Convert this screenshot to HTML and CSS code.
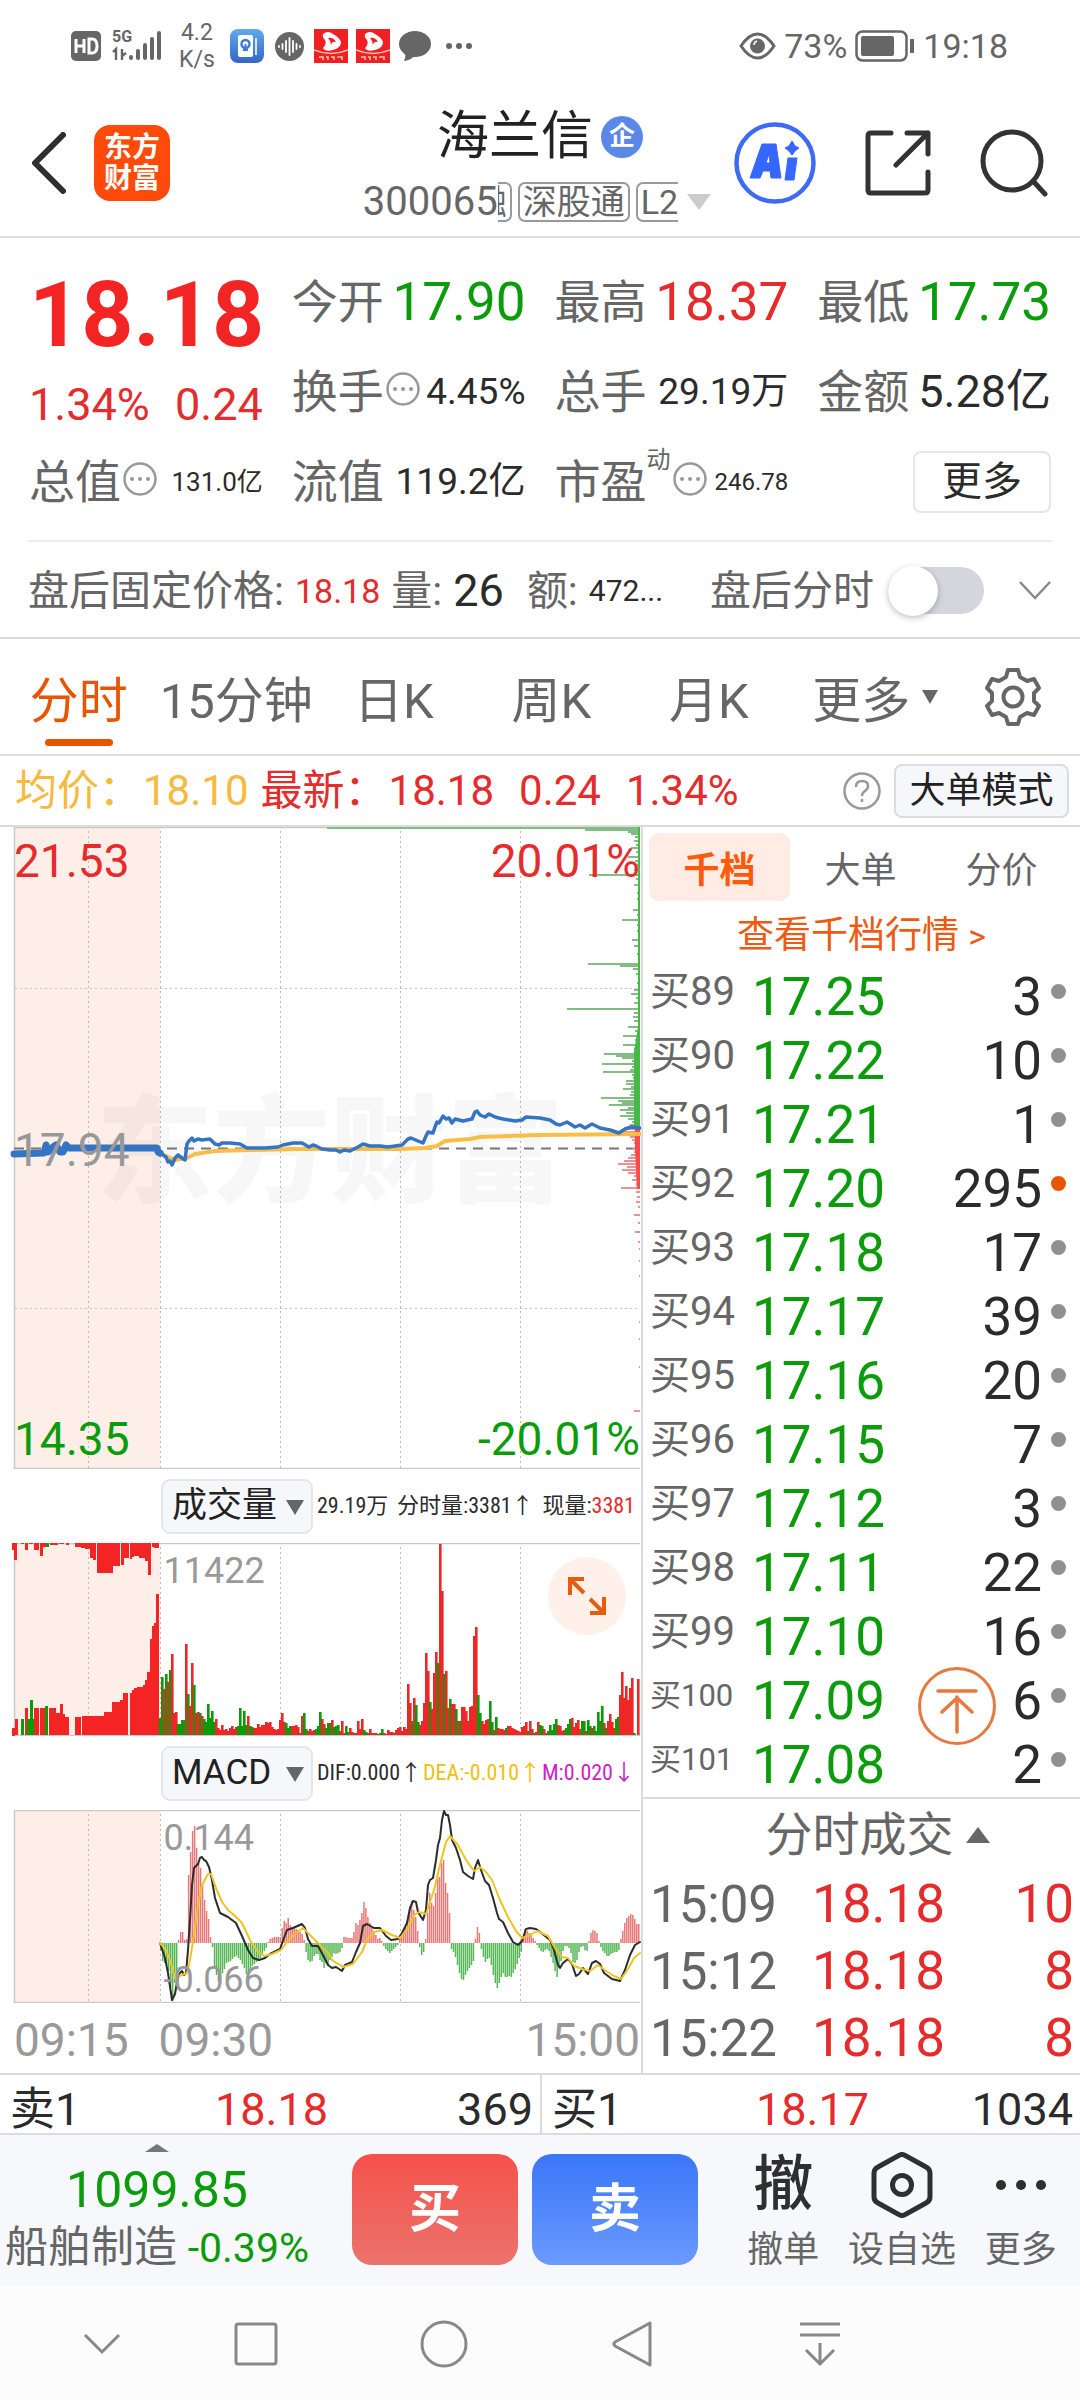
FILE: index.html
```html
<!DOCTYPE html>
<html lang="zh-CN">
<head>
<meta charset="utf-8">
<meta name="viewport" content="width=device-width, initial-scale=1">
<title>海兰信 300065</title>
<link rel="stylesheet" href="styles.css">
</head>
<body>
<div class="status">
  <svg class="st-hd" width="30" height="30" viewBox="0 0 30 30"><rect width="30" height="30" rx="5" fill="#666"/><path d="M5 8v14M13 8v14M5 15h8M18 8v14h3q5 0 5-7t-5-7z" fill="none" stroke="#fff" stroke-width="3"/></svg>
  <div class="st-signal"><span>5G</span>
    <svg width="50" height="32" viewBox="0 0 50 32"><path d="M1 22l3-3v11M10 19v11M10 26l4-3" fill="none" stroke="#666" stroke-width="2.4"/><g stroke="#666" stroke-width="4" stroke-linecap="round"><path d="M19 27v1M26 21v7M33 15v13M40 9v19M47 3v25"/></g></svg>
  </div>
  <div class="st-rate">4.2<br>K/s</div>
  <svg class="st-app" width="34" height="34" viewBox="0 0 34 34"><defs><linearGradient id="ga" x2="0" y2="1"><stop stop-color="#5fa9ee"/><stop offset="1" stop-color="#3566c8"/></linearGradient></defs><rect width="34" height="34" rx="8" fill="url(#ga)"/><rect x="8" y="6" width="15" height="22" rx="2" fill="#fff"/><path d="M26 9v17" stroke="#d4e6fb" stroke-width="2"/><circle cx="15.500" cy="15" r="4" fill="none" stroke="#3f7bd6" stroke-width="2.500"/><path d="M13 21h5M15.500 15v6" stroke="#3f7bd6" stroke-width="2"/></svg>
  <svg class="st-wave" width="29" height="29" viewBox="0 0 29 29"><circle cx="14.500" cy="14.500" r="14.500" fill="#666"/><path d="M4 14v1M7.500 12v5M11 9v11M14.500 6v17M18 9v11M21.500 12v5M25 14v1" stroke="#fff" stroke-width="1.800" stroke-linecap="round"/></svg>
  <svg class="st-red" width="34" height="34" viewBox="0 0 34 34"><rect width="34" height="34" fill="#ef1f24"/><path d="M9 5q5-4 10 0 6 3 8 8 0 6-8 8-8 2-10-2 4-4 2-8-3-3-2-6z" fill="#fff"/><path d="M14 9q5-1 8 4-4-1-5 3 0-4-3-7z" fill="#ef1f24"/><path d="M0 21q17 7 34 0M5 28h4v3M12 28h2v3M17 28h3v3M23 28h5v3" fill="none" stroke="#f7c7a9" stroke-width="1.600"/></svg>
  <svg class="st-red" width="34" height="34" viewBox="0 0 34 34"><rect width="34" height="34" fill="#ef1f24"/><path d="M9 5q5-4 10 0 6 3 8 8 0 6-8 8-8 2-10-2 4-4 2-8-3-3-2-6z" fill="#fff"/><path d="M14 9q5-1 8 4-4-1-5 3 0-4-3-7z" fill="#ef1f24"/><path d="M0 21q17 7 34 0M5 28h4v3M12 28h2v3M17 28h3v3M23 28h5v3" fill="none" stroke="#f7c7a9" stroke-width="1.600"/></svg>
  <svg class="st-chat" width="32" height="30" viewBox="0 0 32 30"><ellipse cx="16" cy="13" rx="16" ry="13" fill="#666"/><path d="M6 20q1 6-1 10 8-1 11-6z" fill="#666"/></svg>
  <svg class="st-dots" width="26" height="6" viewBox="0 0 26 6"><g fill="#666"><circle cx="3" cy="3" r="3"/><circle cx="13" cy="3" r="3"/><circle cx="23" cy="3" r="3"/></g></svg>
  <div class="st-right">
    <svg width="37" height="28" viewBox="0 0 37 28"><path d="M2 14Q10 2 18.500 2T35 14Q27 26 18.500 26T2 14z" fill="none" stroke="#666" stroke-width="3"/><circle cx="18.500" cy="14" r="7.500" fill="#666"/><path d="M15 13q0-3 3-4" fill="none" stroke="#fff" stroke-width="1.500"/></svg>
    <span>73%</span>
    <svg width="60" height="32" viewBox="0 0 60 32"><rect x="1.500" y="1.500" width="50" height="29" rx="6" fill="none" stroke="#666" stroke-width="2.500"/><rect x="6" y="6" width="33" height="20" rx="2" fill="#666"/><path d="M57 9v14" stroke="#666" stroke-width="4"/></svg>
    <span>19:18</span>
  </div>
</div>

<header class="head">
  <div class="head-left">
    <button class="icon" aria-label="返回"><svg width="35" height="62" viewBox="0 0 35 62"><path d="M32 3L4 31l28 28" fill="none" stroke="#2f2f2f" stroke-width="6" stroke-linecap="round" stroke-linejoin="round"/></svg></button>
    <a class="logo" href="#home">东方<br>财富</a>
  </div>
  <div class="head-mid">
    <h1>海兰信<span class="corp">企</span></h1>
    <div class="code">300065<span class="tag tag-cut">融</span><span class="tag">深股通</span><span class="tag tag-open">L2</span><button class="icon code-more" aria-label="展开"><svg width="24" height="16" viewBox="0 0 24 16"><path d="M0 0h24L12 16z" fill="#ccc"/></svg></button></div>
  </div>
  <div class="head-right">
    <button class="icon" aria-label="AI"><svg width="82" height="82" viewBox="0 0 82 82"><circle cx="41" cy="41" r="38.500" fill="none" stroke="#3d6bf5" stroke-width="4.500"/><path d="M28 22h14l5 34h-10l-1-7h-7l-3 7H16zM32 41h4l-1-9z" fill="#3566ff" fill-rule="evenodd" stroke="#3566ff" stroke-width="1"/><path d="M54 36h9l-3 22h-9zM58 19l3 5 4 2-4 3-3 4-3-4-4-3 4-2z" fill="#3566ff" stroke="#3566ff" stroke-width="1"/></svg></button>
    <button class="icon" aria-label="分享"><svg width="66" height="66" viewBox="0 0 66 66"><path d="M26 3H6Q3 3 3 6v54q0 3 3 3h54q3 0 3-3V42M42 3h21v21M63 3L31 35" fill="none" stroke="#333" stroke-width="5" stroke-linecap="round" stroke-linejoin="round"/></svg></button>
    <button class="icon" aria-label="搜索"><svg width="68" height="68" viewBox="0 0 68 68"><circle cx="32" cy="32" r="29" fill="none" stroke="#333" stroke-width="5"/><path d="M53 52l12 13" stroke="#333" stroke-width="5" stroke-linecap="round"/></svg></button>
  </div>
</header>

<section class="quote">
  <div class="grid">
    <div class="last"><strong>18.18</strong><div class="chg"><span>1.34%</span><span>0.24</span></div></div>
    <div class="cell"><span>今开</span><b class="v52 down">17.90</b></div>
    <div class="cell"><span>最高</span><b class="v52 up">18.37</b></div>
    <div class="cell"><span>最低</span><b class="v52 down">17.73</b></div>
    <div class="cell"><span>换手</span><svg class="info" viewBox="0 0 34 34"><circle cx="17" cy="17" r="15.500"/><path d="M9 17h.1M17 17h.1M25 17h.1"/></svg><b class="v36">4.45%</b></div>
    <div class="cell"><span>总手</span><b class="v36">29.19万</b></div>
    <div class="cell"><span>金额</span><b class="v44">5.28亿</b></div>
    <div class="cell"><span>总值</span><svg class="info" viewBox="0 0 34 34"><circle cx="17" cy="17" r="15.500"/><path d="M9 17h.1M17 17h.1M25 17h.1"/></svg><b class="v26">131.0亿</b></div>
    <div class="cell"><span>流值</span><b class="v36">119.2亿</b></div>
    <div class="cell"><span>市盈</span><sup>动</sup><svg class="info" viewBox="0 0 34 34"><circle cx="17" cy="17" r="15.500"/><path d="M9 17h.1M17 17h.1M25 17h.1"/></svg><b class="v24">246.78</b></div>
    <div class="cell"><button class="more">更多</button></div>
  </div>
  <div class="after">
    <span>盘后固定价格:</span><b class="v34 up">18.18</b>
    <span>量:</span><b class="v44">26</b>
    <span class="amt">额:</span><b class="v30">472...</b>
    <label class="switch">盘后分时<input type="checkbox" role="switch"></label>
    <button class="icon" aria-label="展开盘后"><svg width="34" height="22" viewBox="0 0 34 22"><path d="M2 2l15 16L32 2" fill="none" stroke="#888" stroke-width="2.500"/></svg></button>
  </div>
</section>

<nav class="tabs">
  <button class="on">分时</button><button>15分钟</button><button>日K</button><button>周K</button><button>月K</button>
  <button class="tab-more">更多<svg width="16" height="14" viewBox="0 0 16 14"><path d="M0 0h16L8 14z" fill="#666"/></svg></button>
  <button class="gear" aria-label="设置"><svg width="60" height="60" viewBox="0 0 60 60"><path d="M25 3h10l2 7 7 4 7-2 5 9-5 5v8l5 5-5 9-7-2-7 4-2 7H25l-2-7-7-4-7 2-5-9 5-5v-8l-5-5 5-9 7 2 7-4z" fill="none" stroke="#666" stroke-width="4" stroke-linejoin="round"/><circle cx="30" cy="30" r="9.500" fill="none" stroke="#666" stroke-width="4"/></svg></button>
</nav>

<div class="avg">
  <span class="gold">均价：</span><span class="gold">18.10</span>
  <span class="up lbl">最新：</span><span class="up">18.18</span><span class="up sp">0.24</span><span class="up sp">1.34%</span>
  <button class="icon help" aria-label="帮助"><svg width="38" height="38" viewBox="0 0 38 38"><circle cx="19" cy="19" r="17.500" fill="none" stroke="#999" stroke-width="2.500"/><path d="M13 15q0-6 6-6t6 5q0 3-3 5t-3 5M19 27v3" fill="none" stroke="#999" stroke-width="2.500"/></svg></button>
  <button class="mode">大单模式</button>
</div>

<main class="main">
  <section class="charts">
    <div class="chart">
      <svg id="price" viewBox="0 0 641 642"></svg>
      <span class="ax tl up">21.53</span><span class="ax tr up">20.01%</span>
      <span class="ax ml mute">17.94</span>
      <span class="ax bl down">14.35</span><span class="ax br down">-20.01%</span>
    </div>
    <div class="ind">
      <div class="pick"><select aria-label="成交指标"><option>成交量</option></select><svg width="18" height="15" viewBox="0 0 18 15"><path d="M0 0h18L9 15z" fill="#666"/></svg></div>
      <div class="vals vals-vol"><span>29.19万</span><span>分时量:3381↑</span><span>现量:<i class="up">3381</i></span></div>
    </div>
    <div class="chart">
      <svg id="volume" viewBox="0 0 641 193"></svg>
      <span class="ax2 top">11422</span>
      <button class="expand" aria-label="全屏"><svg width="38" height="38" viewBox="0 0 38 38"><path d="M16 2H2v16M2 2l14 14M22 36h14V20M36 36L22 22" fill="none" stroke="#e65c0f" stroke-width="4"/></svg></button>
    </div>
    <div class="ind">
      <div class="pick"><select aria-label="技术指标"><option>MACD</option></select><svg width="18" height="15" viewBox="0 0 18 15"><path d="M0 0h18L9 15z" fill="#666"/></svg></div>
      <div class="vals"><span>DIF:0.000↑</span><span class="dea">DEA:-0.010↑</span><span class="m">M:0.020↓</span></div>
    </div>
    <div class="chart">
      <svg id="macd" viewBox="0 0 641 193"></svg>
      <span class="ax2 top">0.144</span><span class="ax2 bot">-0.066</span>
    </div>
    <div class="times"><span>09:15</span><span>09:30</span><span class="end">15:00</span></div>
  </section>

  <section class="side">
    <div class="side-tabs"><button class="on">千档</button><button>大单</button><button>分价</button></div>
    <a class="depth-link" href="#depth">查看千档行情 <span>&gt;</span></a>
    <div class="book-wrap">
      <table class="book">
        <tr><th>买89</th><td class="down">17.25</td><td>3</td><td class="dot"></td></tr>
        <tr><th>买90</th><td class="down">17.22</td><td>10</td><td class="dot"></td></tr>
        <tr><th>买91</th><td class="down">17.21</td><td>1</td><td class="dot"></td></tr>
        <tr><th>买92</th><td class="down">17.20</td><td>295</td><td class="dot hot"></td></tr>
        <tr><th>买93</th><td class="down">17.18</td><td>17</td><td class="dot"></td></tr>
        <tr><th>买94</th><td class="down">17.17</td><td>39</td><td class="dot"></td></tr>
        <tr><th>买95</th><td class="down">17.16</td><td>20</td><td class="dot"></td></tr>
        <tr><th>买96</th><td class="down">17.15</td><td>7</td><td class="dot"></td></tr>
        <tr><th>买97</th><td class="down">17.12</td><td>3</td><td class="dot"></td></tr>
        <tr><th>买98</th><td class="down">17.11</td><td>22</td><td class="dot"></td></tr>
        <tr><th>买99</th><td class="down">17.10</td><td>16</td><td class="dot"></td></tr>
        <tr><th class="small">买100</th><td class="down">17.09</td><td>6</td><td class="dot"></td></tr>
        <tr><th class="small">买101</th><td class="down">17.08</td><td>2</td><td class="dot"></td></tr>
      </table>
      <button class="to-top" aria-label="回到顶部"><svg width="78" height="78" viewBox="0 0 78 78"><circle cx="39" cy="39" r="37.500" fill="none" stroke="#e5793f" stroke-width="3"/><path d="M20 24h38M39 30v35M24 45l15-14 15 14" fill="none" stroke="#e5793f" stroke-width="3.500" stroke-linecap="round" stroke-linejoin="round"/></svg></button>
    </div>
    <button class="deals-head">分时成交<svg width="24" height="16" viewBox="0 0 24 16"><path d="M0 16h24L12 0z" fill="#666"/></svg></button>
    <table class="deals">
      <tr><th>15:09</th><td>18.18</td><td>10</td></tr>
      <tr><th>15:12</th><td>18.18</td><td>8</td></tr>
      <tr><th>15:22</th><td>18.18</td><td>8</td></tr>
    </table>
  </section>
</main>

<div class="best">
  <div><span>卖1</span><span class="up">18.18</span><span>369</span></div>
  <div><span>买1</span><span class="up">18.17</span><span>1034</span></div>
</div>

<footer class="actions">
  <button class="index"><svg width="24" height="8" viewBox="0 0 24 8"><path d="M0 8h24L12 0z" fill="#777"/></svg><span class="idx-v">1099.85</span><span class="idx-n">船舶制造 <em>-0.39%</em></span></button>
  <button class="trade buy">买</button>
  <button class="trade sell">卖</button>
  <div class="tools">
    <button><span class="tool-ico che">撤</span>撤单</button>
    <button><span class="tool-ico"><svg width="62" height="66" viewBox="0 0 62 66"><path d="M27 4q4-3 8 0l20 11q4 2 4 6v24q0 4-4 6L35 62q-4 3-8 0L7 51q-4-2-4-6V21q0-4 4-6z" fill="none" stroke="#2f2f2f" stroke-width="5"/><circle cx="31" cy="33" r="9.500" fill="none" stroke="#2f2f2f" stroke-width="5"/></svg></span>设自选</button>
    <button><span class="tool-ico"><svg width="52" height="12" viewBox="0 0 52 12"><g fill="#2f2f2f"><circle cx="6" cy="6" r="5"/><circle cx="26" cy="6" r="5"/><circle cx="46" cy="6" r="5"/></g></svg></span>更多</button>
  </div>
</footer>

<nav class="sysnav">
  <button aria-label="收起"><svg width="38" height="24" viewBox="0 0 38 24"><path d="M2 3l17 17L36 3" /></svg></button>
  <button aria-label="最近任务"><svg width="44" height="44" viewBox="0 0 44 44"><rect x="2" y="2" width="40" height="40" rx="2"/></svg></button>
  <button aria-label="主页"><svg width="48" height="48" viewBox="0 0 48 48"><circle cx="24" cy="24" r="22"/></svg></button>
  <button aria-label="后退"><svg width="42" height="48" viewBox="0 0 42 48"><path d="M39 3v42L4 26q-2-2 0-4z" stroke-linejoin="round"/></svg></button>
  <button aria-label="通知"><svg width="40" height="46" viewBox="0 0 40 46"><path d="M0 3h40M0 14h40M20 22v20M6 29l14 14 14-14"/></svg></button>
</nav>
<script src="charts.js"></script>
</body>
</html>
```
FILE: styles.css
```css
* { box-sizing: border-box; }
body { margin: 0; background: #fff; color: #2b2b2b; font-family: Roboto, "Noto Sans CJK SC", sans-serif; }
button { font: inherit; color: inherit; background: none; border: 0; padding: 0; margin: 0; }
b, i, em { font-weight: 400; font-style: normal; }
svg { display: block; flex: none; }
.icon { display: block; }
.up { color: #e52b2b; }
.down { color: #0a9c0a; }
.mute { color: #999; }

/* status bar */
.status { display: flex; align-items: center; height: 92px; padding: 0 72px 0 71px; color: #666; }
.st-signal { position: relative; margin-left: 11px; }
.st-signal span { position: absolute; left: 0; top: 0; font-size: 16px; line-height: 14px; font-weight: 700; }
.st-rate { margin-left: 17px; font-size: 23px; line-height: 27px; text-align: center; }
.st-app { margin-left: 15px; }
.st-wave { margin-left: 11px; }
.st-red { margin-left: 8px; }
.st-wave + .st-red { margin-left: 10px; }
.st-chat { margin-left: 9px; }
.st-dots { margin-left: 15px; }
.st-right { display: flex; align-items: center; gap: 8px; margin-left: auto; font-size: 34px; line-height: 40px; }

/* header */
.head { display: grid; grid-template-columns: 1fr auto 1fr; height: 146px; border-bottom: 2px solid #dcdcdc; }
.head-left, .head-right { display: flex; align-items: center; padding-bottom: 2px; }
.head-left { padding-left: 31px; gap: 28px; }
.head-right { justify-content: flex-end; gap: 49px; padding-right: 32px; }
.logo { width: 76px; height: 76px; padding-top: 7px; border-radius: 16px; background: #ff4a0a; color: #fff; font-size: 28px; line-height: 31px; font-weight: 700; text-align: center; text-decoration: none; }
.head-mid { padding-top: 13px; }
h1 { display: flex; justify-content: center; align-items: center; gap: 8px; margin: 0; font-size: 52px; line-height: 64px; font-weight: 400; color: #222; }
.corp { width: 42px; height: 42px; border-radius: 50%; background: #5b87e8; color: #fff; font-size: 26px; line-height: 40px; font-weight: 700; text-align: center; }
.code { display: flex; align-items: center; justify-content: center; margin-top: 10px; padding-right: 6px; font-size: 40px; line-height: 46px; color: #666; }
.tag { height: 40px; margin-right: 6px; padding: 0 3px; border: 2px solid #999; border-radius: 7px; font-size: 34px; line-height: 36px; white-space: nowrap; }
.tag-cut { display: flex; justify-content: flex-end; width: 14px; overflow: hidden; border-left: 0; border-radius: 0 7px 7px 0; }
.tag-open { margin-right: 9px; padding-right: 0; border-right: 0; border-radius: 7px 0 0 7px; }

/* quote */
.quote { border-bottom: 2px solid #dcdcdc; }
.grid { display: grid; grid-template-columns: repeat(4, minmax(0, 1fr)); column-gap: 29px; grid-auto-rows: 90px; padding: 19px 29px 13px; }
.last { grid-row: span 2; padding-top: 6px; color: #f32424; white-space: nowrap; text-align: center; }
.last strong { display: block; font-size: 91px; line-height: 104px; font-weight: 700; }
.chg { display: flex; justify-content: space-between; font-size: 45px; line-height: 76px; color: #e52b2b; }
.cell { display: flex; align-items: center; font-size: 46px; line-height: 60px; color: #666; white-space: nowrap; }
.cell b, .cell .more { margin-left: auto; }
.cell b { color: #2b2b2b; }
.cell b.up { color: #e52b2b; }
.cell b.down { color: #0a9c0a; }
.v52 { font-size: 53px; } .v44 { font-size: 45px; } .v36 { font-size: 37px; } .v34 { font-size: 34px; }
.v30 { font-size: 30px; } .v26 { font-size: 26px; } .v24 { font-size: 24px; }
.info { width: 34px; height: 34px; margin: 0 0 6px 2px; fill: none; stroke: #999; stroke-width: 2.5; }
.info path { stroke-width: 4; stroke-linecap: round; }
.cell sup { align-self: flex-start; font-size: 24px; line-height: 46px; }
.more { width: 138px; height: 62px; border: 2px solid #e6e6e6; border-radius: 8px; color: #2b2b2b; font-size: 40px; line-height: 56px; }
.after { display: flex; align-items: center; height: 97px; margin: 0 28px; padding-top: 2px; border-top: 2px solid #ececec; font-size: 41px; line-height: 60px; color: #666; white-space: nowrap; }
.after b { margin: 0 11px; }
.after b:not(.up) { color: #2b2b2b; }
.amt { margin-left: 12px; }
.switch { display: flex; align-items: center; gap: 14px; margin-left: auto; }
.switch input { appearance: none; display: flex; align-items: center; width: 96px; height: 47px; margin: 0 34px 0 0; border-radius: 24px; background: #d3d6dc; }
.switch input::before { content: ""; width: 50px; height: 50px; flex: none; border-radius: 50%; background: #fff; box-shadow: 0 2px 6px rgba(0, 0, 0, .25); }
.switch input:checked { background: #e85400; justify-content: flex-end; }

/* period tabs */
.tabs { display: grid; grid-template-columns: repeat(6, 7fr) 6fr; height: 117px; border-bottom: 2px solid #dcdcdc; font-size: 49px; color: #666; white-space: nowrap; }
.tabs button { position: relative; display: flex; align-items: center; justify-content: center; gap: 12px; }
.tabs .tab-more { padding-left: 18px; }
.tabs .on { color: #e85400; }
.tabs .on::after { content: ""; position: absolute; left: 50%; bottom: 8px; width: 68px; height: 7px; margin-left: -34px; border-radius: 4px; background: #e85400; }

/* average line */
.avg { display: flex; align-items: center; height: 71px; padding: 0 11px 0 15px; border-bottom: 2px solid #dcdcdc; font-size: 42px; line-height: 60px; white-space: nowrap; }
.gold { color: #f7b93e; }
.avg .gold + .gold { margin-left: 2px; }
.avg .lbl { margin-left: 12px; }
.avg .lbl + .up { margin-left: 2px; }
.avg .sp { margin-left: 25px; }
.help { margin-left: auto; }
.mode { width: 175px; height: 54px; margin-left: 13px; border: 2px solid #d9dce3; border-radius: 8px; background: #f6f7fa; color: #222; font-size: 36px; line-height: 48px; }

/* charts */
.main { display: grid; grid-template-columns: 643fr 437fr; }
.charts { border-right: 2px solid #dcdcdc; min-width: 0; }
.chart { position: relative; }
.chart > svg { width: 100%; height: auto; }
.ax, .ax2 { position: absolute; white-space: nowrap; }
.ax { font-size: 46px; line-height: 48px; }
.ax2 { left: 25.5%; font-size: 36px; line-height: 40px; color: #999; }
.tl, .tr { top: 10px; } .bl, .br { bottom: 6px; }
.tl, .bl, .ml { left: 14px; } .tr, .br { right: 1px; }
.ml { top: 299px; }
.top { top: 8px; } .bot { bottom: 3px; }
.ind { display: flex; align-items: center; height: 74px; padding: 0 6px 0 161px; }
.pick { position: relative; flex: none; }
.pick select { appearance: none; display: block; width: 152px; height: 55px; padding: 0 0 0 9px; border: 2px solid #e4e6ec; border-radius: 9px; background: #f6f7fa; color: #222; font: 35px/48px Roboto, "Noto Sans CJK SC", sans-serif; }
.pick svg { position: absolute; right: 9px; top: 21px; pointer-events: none; }
.vals { display: flex; flex: 1; justify-content: space-between; padding-left: 4px; font-family: "Roboto Condensed", "Liberation Sans Narrow", Roboto, "Noto Sans CJK SC", sans-serif; font-size: 22px; line-height: 50px; white-space: nowrap; }
.dea { color: #f0c010; } .m { color: #cc22cc; }
.expand { position: absolute; right: 15px; top: 14px; width: 78px; height: 78px; border-radius: 50%; background: #fff0e9; display: flex; align-items: center; justify-content: center; }
.times { display: flex; height: 70px; padding: 0 1px 0 14px; font-size: 46px; line-height: 74px; color: #999; gap: 30px; }
.times .end { margin-left: auto; }

/* order book */
.side { display: flex; flex-direction: column; padding-top: 6px; min-width: 0; }
.side-tabs { display: grid; grid-template-columns: repeat(3, 1fr); height: 68px; padding: 0 8px 0 6px; font-size: 36px; color: #666; }
.side-tabs .on { border-radius: 10px; background: #ffede5; color: #ff5a0a; font-weight: 700; }
.depth-link { height: 64px; color: #ee5a12; font-size: 37px; line-height: 70px; text-align: center; text-decoration: none; white-space: nowrap; }
.depth-link span { font-size: 34px; }
.book-wrap { position: relative; }
.book, .deals { width: 100%; border-collapse: collapse; table-layout: fixed; }
.book th, .book td, .deals th, .deals td { padding: 0; text-align: right; font-weight: 400; white-space: nowrap; }
.book tr { height: 64px; }
.book th { width: 104px; padding: 0 0 10px 7px; text-align: left; font-size: 40px; line-height: 54px; color: #666; }
.book th.small { font-size: 31px; }
.book td { font-size: 53px; line-height: 64px; }
.book td:nth-child(2) { width: 138px; }
.book .dot { width: 38px; padding: 0 14px 15px 0; line-height: 0; }
.dot::after { content: ""; display: inline-block; width: 15px; height: 15px; border-radius: 50%; background: #8f8f96; }
.dot.hot::after { background: #e85400; }
.to-top { position: absolute; right: 84px; bottom: 52px; }
.deals-head { display: flex; align-items: center; justify-content: center; gap: 12px; height: 74px; padding-left: 32px; border-top: 2px solid #dcdcdc; font-size: 47px; line-height: 68px; color: #666; }
.deals tr { height: 67px; }
.deals th { width: 134px; padding-left: 7px; text-align: left; font-size: 51px; line-height: 67px; color: #666; }
.deals td { font-size: 53px; line-height: 67px; color: #e52b2b; }
.deals td:nth-child(2) { width: 168px; }
.deals td:last-child { padding-right: 6px; }

/* best bid and ask */
.best { display: grid; grid-template-columns: 1fr 1fr; border-top: 2px solid #dcdcdc; border-bottom: 2px solid #dcdcdc; }
.best div { display: grid; grid-template-columns: 1fr 1fr 1fr; height: 58px; padding: 4px 7px 0 10px; font-size: 45px; line-height: 62px; }
.best div + div { border-left: 2px solid #dcdcdc; }
.best span:nth-child(2) { text-align: center; }
.best span:nth-child(3) { text-align: right; }

/* action bar */
.actions { display: flex; height: 151px; padding-top: 9px; background: #f7f8fb; }
.index { display: flex; flex-direction: column; align-items: center; width: 314px; margin-right: 38px; white-space: nowrap; }
.idx-v { font-size: 50px; line-height: 70px; margin-top: 3px; color: #0a9c0a; }
.idx-n { font-size: 43px; line-height: 44px; color: #666; }
.idx-n em { font-size: 41px; color: #0a9c0a; }
.trade { width: 166px; height: 111px; margin: 10px 14px 0 0; border-radius: 20px; color: #fff; font-size: 52px; line-height: 104px; font-weight: 700; }
.buy { background: linear-gradient(#f4514a, #eb746d); }
.sell { background: linear-gradient(#3a76f8, #6b9aff); }
.tools { display: grid; grid-template-columns: repeat(3, 1fr); flex: 1; margin-left: 12px; }
.tools button { display: flex; flex-direction: column; align-items: center; font-size: 36px; line-height: 48px; color: #666; white-space: nowrap; }
.tool-ico { display: flex; align-items: center; height: 82px; color: #2f2f2f; }
.che { font-size: 60px; line-height: 82px; font-weight: 500; }

/* system navigation */
.sysnav { display: grid; grid-template-columns: 162fr 188fr 188fr 188fr 188fr 166fr; height: 116px; background: #fcfcfc; }
.sysnav button { display: flex; align-items: center; justify-content: center; }
.sysnav button:first-child { padding-left: 42px; }
.sysnav svg { fill: none; stroke: #888; stroke-width: 3; }
```
FILE: charts.js
```js
const RED = '#f42424', GREEN = '#089c08', EDGE = '#c9c9c9';

const rect = (x, y, w, h, fill) => `<rect x="${x}" y="${y}" width="${w}" height="${h}" fill="${fill}"/>`;
const line = (pts, color, w) => `<polyline points="${pts}" fill="none" stroke="${color}" stroke-width="${w}" stroke-linejoin="round" stroke-linecap="round"/>`;

// Call-auction band, dotted time grid and frame shared by the three charts
function frame(h) {
  let s = rect(15, 0, 145, h, '#fdeee8');
  for (const x of [88, 160, 280, 400, 520]) {
    s += `<path d="M${x}.5 4V${h}" stroke="#bbb" stroke-dasharray="2 3"/>`;
  }
  return s + `<path d="M640 .5H14.500V${h - 0.5}H640" fill="none" stroke="${EDGE}" stroke-width="1.500"/>`;
}

/* ---- price ---- */
const priceLine = '160,326 166,330 168,335 170,334 172,338 175,331 178,328 182,331 185,333 187,317 189,314 192,311 194,314 198,312 202,313 210,312 215,317 219,318 222,316 230,316 240,317 247,321 255,321 265,321 278,320 283,318 288,317 293,316 302,316 309,320 313,318 316,319 322,322 330,323 336,323 340,325 344,323 350,324 358,320 363,317 370,319 380,319 388,320 395,319 402,318 408,312 411,311 418,314 423,316 426,309 428,305 433,306 435,300 437,295 439,296 443,289 446,292 449,291 452,296 455,292 463,294 472,292 475,285 477,284 480,288 485,290 489,287 495,290 503,292 515,294 522,293 526,290 540,291 550,293 556,297 560,298 567,295 575,300 580,298 585,301 592,297 600,301 610,303 619,306 625,302 631,300 640,301';
const avgLine = '160,326 168,330 175,333 187,331 195,327 215,324 250,323 300,322 360,322 400,322 425,321 437,319 445,314 470,312 480,310 540,308 640,307';
// resting orders: [y, bar length]
const asks = [[1,313],[3,55],[5,12],[7,9],[10,5],[14,6],[18,4],[21,9],[25,4],[30,12],[34,5],[38,4],[43,6],[48,51],[52,4],[58,6],[66,3],[72,3],[83,7],[88,3],[93,18],[98,3],[104,3],[113,8],[119,6],[127,3],[137,52],[139,20],[142,7],[147,4],[156,3],[163,6],[167,9],[171,4],[176,6],[182,73],[186,6],[190,7],[194,6],[200,12],[204,5],[209,17],[213,5],[218,17],[222,6],[227,36],[229,24],[231,18],[234,8],[237,38],[240,8],[243,10],[245,37],[248,8],[251,7],[254,14],[257,14],[260,9],[262,17],[265,9],[268,10],[271,39],[274,22],[276,18],[278,31],[281,12],[283,20],[286,14],[289,20],[292,12],[295,8],[298,10]];
const bids = [[302,12],[305,20],[307,14],[310,10],[313,8],[316,6],[319,5],[322,8],[325,6],[328,9],[331,12],[334,16],[337,22],[340,13],[343,18],[346,12],[349,6],[353,8],[357,4],[361,19],[365,4],[370,3],[375,4],[380,2],[388,6],[396,2],[405,5],[415,2],[422,1],[434,1],[449,1],[495,1],[512,1],[540,1],[584,6]];

let price = frame(642);
price += '<path d="M15 161.500H640M15 481.500H640" stroke="#c4c4c4" stroke-dasharray="2 3"/>';
price += '<text x="330" y="366" text-anchor="middle" font-size="117" font-weight="900" fill="#000" fill-opacity=".03">东方财富</text>';
price += '<path d="M14 321.500H640" stroke="#777" stroke-width="2" stroke-dasharray="10 7"/>';
for (const [y, w] of asks) price += rect(640 - w, y - 1, w, 2, '#84bd84');
price += '<path d="M640 0v300h-6v-75l4-25V0z" fill="#45b845"/>';
for (const [y, w] of bids) price += rect(640 - w, y - 1, w, 2, '#f09090');
price += '<path d="M640 300v62h-3l-2-40v-22z" fill="#ff4a4a"/>';
price += line(avgLine, '#f8be4a', 4);
price += line(priceLine, '#3474c4', 3.5);
price += line('14,327 44,326 46,318 48,325 53,320 56,318 60,325 63,325 66,318 69,321 76,321 157,321 158,325 160,326', '#3474c4', 7);
document.getElementById('price').innerHTML = price;

/* ---- volume ---- */
// auction bars: [x, width, height, colour]
const matched = [[12,3,8],[15,3,17],[21,3,17,1],[25,3,28],[27,7,17,1],[30,3,36,1],[34,5,28],[40,5,28],[45,3,30,1],[49,7,28],[56,4,23],[60,3,32],[63,2,22],[65,4,19],[75,6,19],[82,22,20],[104,8,24],[112,8,34],[120,3,36],[123,5,43],[130,2,43],[132,2,46],[134,3,48],[137,6,49],[143,2,51],[145,2,56],[147,3,64],[150,2,97],[152,2,110],[154,2,113],[156,3,142]];
const unmatched = [[12,3,7],[14,3,17],[21,3,1,1],[25,3,7],[29,4,1],[34,5,7],[40,3,13],[43,3,4],[46,3,4,1],[50,8,2],[59,5,1],[66,3,2],[75,6,4],[81,4,5],[85,5,6],[90,3,15],[93,3,17],[97,16,30],[113,7,23],[121,3,22],[124,5,15],[130,2,16],[132,2,14],[134,5,13],[139,6,15],[145,3,18],[148,3,32],[152,3,4],[154,5,5]];
// one bar per minute, r = rise, g = fall
const volume = 'g18 g59 r47 g62 r54 g66 r82 r23 r24 g12 g12 g16 g16 r92 g42 r30 r73 g51 r23 r24 g23 r20 g17 g14 g32 g18 g25 g14 r17 r8 r6 r11 r6 r7 r5 r8 r10 r7 r9 g10 g28 g10 g25 g11 r20 g10 g9 r8 r8 r12 r9 r11 r11 r14 r13 r14 r9 r7 r6 r7 r16 r23 r14 g13 g8 g10 r10 r10 r11 r9 r3 r20 g23 g7 r5 r7 r5 r6 g7 g10 g24 r17 r12 g8 g13 g13 r16 g9 g10 g11 r5 r15 r3 g10 g4 r8 r4 r3 r3 r15 r7 r17 g6 g4 r3 r7 r3 r3 r3 r2 g3 g7 r3 r2 r6 r4 r4 r3 r6 r8 r9 r5 r9 r7 r52 r33 g15 r38 g31 g14 r11 r15 r33 r83 r65 g34 r27 r63 r84 g73 r192 r145 g62 r65 r28 g37 r32 r32 g27 r15 g15 r29 r29 r25 r15 r29 r30 r100 r109 g41 g23 r15 r12 r16 r17 g35 g14 r6 g19 r8 r7 r7 r6 g8 r10 r10 r8 r7 r6 r5 r4 r9 r10 r14 g5 r15 r7 g3 r4 r14 g11 g10 r7 r3 g5 g11 g6 g12 g17 r11 r10 r5 r6 g8 g12 g17 r18 r9 r13 r16 r7 g15 g15 r5 g16 g10 r8 g10 g5 g24 g15 g30 r13 g8 r15 r22 r14 r8 g17 g19 r41 r64 r38 r50 r36 r48 r58 g3 g0 r57'.split(' ');

let vol = frame(193);
for (const [x, w, h, fall] of matched) vol += rect(x, 193 - h, w, h, fall ? GREEN : RED);
for (const [x, w, h, fall] of unmatched) vol += rect(x, 0, w, h, fall ? GREEN : RED);
volume.forEach((v, i) => {
  const h = +v.slice(1);
  vol += rect(159 + i * 480 / volume.length, 193 - h, 2.6, h, v[0] === 'r' ? '#ee2626' : GREEN);
});
vol += `<path d="M15 192.500H640" stroke="${EDGE}"/>`;
document.getElementById('volume').innerHTML = vol;

/* ---- MACD ---- */
const hist = [-8,-18,-20,-22,-28,-45,-58,-40,-33,3,11,11,3,4,68,91,112,117,95,80,75,60,43,32,24,6,-4,-25,-32,-38,-40,-30,-26,-20,-19,-18,-16,-14,-13,-15,-17,-21,-25,-31,-32,-26,-23,-21,-19,-18,-15,-11,-8,-5,1,4,5,6,6,6,6,15,22,20,25,18,16,15,14,13,11,9,3,-9,-17,-19,-18,-13,-11,-11,-17,-19,-25,-20,-22,-17,-14,-10,-11,-10,-9,-5,6,6,5,5,5,11,20,18,23,30,41,35,26,20,16,12,8,4,5,2,-3,-6,-8,-10,-8,-6,-4,-2,5,10,14,16,24,36,42,33,26,12,-4,-12,-9,4,30,50,40,37,50,70,66,80,83,60,50,30,-6,-9,-14,-22,-30,-36,-37,-32,-28,-25,-22,-18,4,16,10,-6,-14,-19,-16,-15,-22,-32,-40,-45,-40,-34,-30,-34,-34,-33,-34,-30,-26,-21,-15,-9,4,14,12,10,8,5,2,-2,-5,-8,-9,-7,-6,-8,-14,-20,-28,-34,-25,-18,-8,-3,-3,-5,-10,-19,-20,-17,-9,-4,-3,-7,-8,2,10,13,12,10,2,-4,-8,-10,-13,-13,-11,-10,-9,-9,-7,4,12,20,25,27,29,28,24,19,19];
const dif = '160,133 165,148 168,163 172,190 175,184 177,172 179,164 182,161 184,165 186,163 188,140 190,110 192,75 194,58 198,54 200,48 202,47 204,50 206,51 209,57 212,70 215,88 220,103 228,107 236,113 242,126 248,140 253,148 259,150 265,148 270,144 280,139 284,128 287,120 293,118 302,114 305,118 308,129 312,136 318,136 324,147 328,155 332,158 336,157 342,161 345,155 352,152 356,142 360,133 363,116 367,114 374,118 380,118 386,126 391,130 398,129 402,123 407,113 410,98 413,91 416,92 418,102 423,110 426,100 428,75 430,70 433,68 436,50 438,35 440,28 442,10 444,1 446,5 448,5 450,15 452,30 456,38 460,50 463,62 468,66 473,69 475,58 478,50 481,60 485,71 489,75 493,88 497,103 499,109 503,112 508,123 513,132 518,135 522,131 526,119 530,118 536,119 540,122 545,126 550,130 554,140 558,155 560,158 563,153 568,149 572,154 576,166 579,164 583,158 588,164 592,153 596,151 600,154 604,163 612,169 620,171 625,160 630,145 635,135 640,132';
const dea = '160,133 166,140 170,150 175,168 182,165 187,163 190,150 194,125 198,95 202,75 208,64 211,64 216,78 222,92 228,100 235,106 242,113 250,130 258,142 264,146 272,144 281,140 288,131 295,124 303,118 312,127 320,135 328,143 332,150 343,157 353,154 362,142 367,130 374,122 382,120 392,125 400,128 408,118 414,105 419,102 426,104 434,80 440,55 446,32 450,26 458,35 466,50 474,61 480,57 486,62 492,70 500,90 508,107 516,121 522,128 530,125 537,121 548,126 555,138 562,147 568,148 574,156 582,159 590,161 598,155 606,161 614,166 621,169 628,159 634,148 640,143';

let macd = frame(193);
hist.forEach((v, i) => {
  macd += rect(160 + i * 480 / hist.length, v > 0 ? 133 - v : 133, 1.5, Math.abs(v), v > 0 ? '#e87878' : '#55b855');
});
macd += line(dif, '#2c2c2c', 2) + line(dea, '#f0c420', 2);
document.getElementById('macd').innerHTML = macd;
```
